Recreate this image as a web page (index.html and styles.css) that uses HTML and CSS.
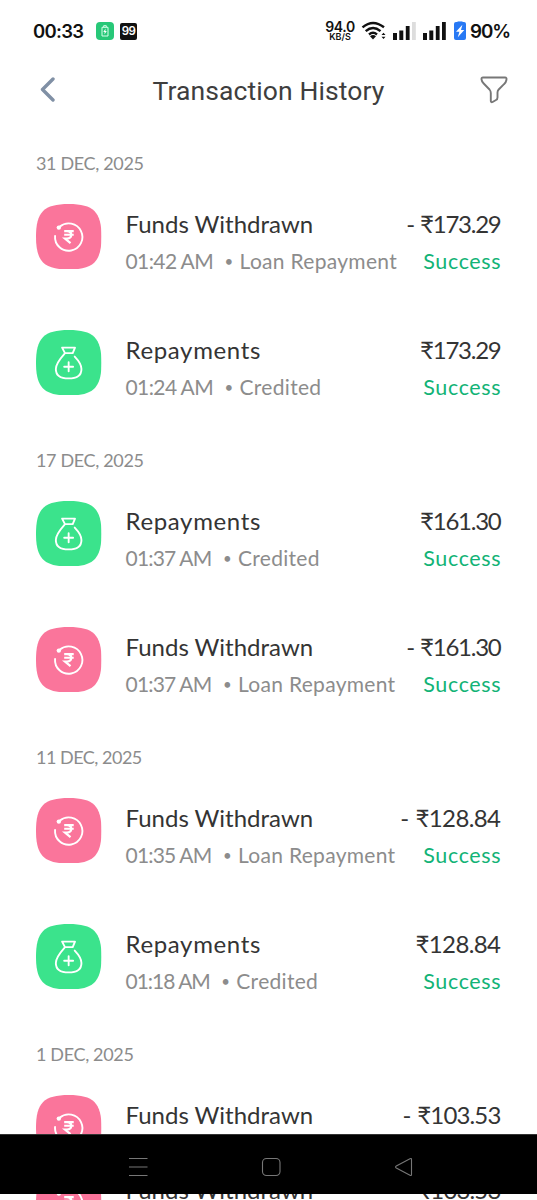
FILE: index.html
```html
<!DOCTYPE html>
<html lang="en">
<head>
<meta charset="utf-8">
<title>Transaction History</title>
<link rel="stylesheet" href="styles.css">
</head>
<body>
<svg class="defs" aria-hidden="true">
  <symbol id="withdraw" viewBox="0 0 66 66">
    <path class="tile-pink" d="M33 0C58 0 66 8 66 33S58 66 33 66 0 58 0 33 8 0 33 0Z"/>
    <path class="line" d="M19.2 32.2A13.8 13.8 0 1 0 23.8 23"/>
    <circle class="dot" cx="23" cy="23.8" r="2.2"/>
    <path class="rupee" d="M28.4 27.4H38M28.4 31H38M29 27.4H31.2C37 27.4 37 34.8 31.2 34.8H29.2L34.8 39.4"/>
  </symbol>
  <symbol id="bag" viewBox="0 0 66 66">
    <path class="tile-green" d="M33 0C58 0 66 8 66 33S58 66 33 66 0 58 0 33 8 0 33 0Z"/>
    <path class="line" d="M26.3 17.8H39.3L37 23.3H29.2ZM29.2 23.3C25.5 27.5 20 33.4 20 39.2C20 46 25 48.8 32.8 48.8S45.8 46 45.8 39.2C45.8 35.4 43 31 39 26.8M32.9 32.5V41.5M28.4 37H37.4"/>
  </symbol>
</svg>
<div class="screen">
  <div class="status">
    <span class="clock">00:33</span>
    <svg class="charge" viewBox="0 0 18 18"><rect width="18" height="18" rx="4" fill="#27c878"/><path d="M6 5.3H12V14H6ZM7.7 5V3.7H10.3V5" fill="none" stroke="#d9ffeb" stroke-width="1"/><path d="M9.6 6.5 7.3 10H8.7L8.4 12.6 10.8 9H9.3Z" fill="#fff"/></svg>
    <span class="badge">99</span>
    <span class="speed"><b>94.0</b><i>KB/S</i></span>
    <svg class="wifi" viewBox="0 0 26 20"><path d="M1.5 6.3Q12 -2.5 23 6.3M4.7 10.1Q12 3.8 19.5 10.1M8 13.5Q12 10.2 16 13.5" fill="none" stroke="#111" stroke-width="2.4"/><path d="M9 15.2Q12 13 15 15.2L12 18.4Z" fill="#111"/><path d="M20.5 14 22.5 11.7 24.5 14ZM20.5 15.7H24.5L22.5 18Z" fill="#111"/></svg>
    <svg class="sim" viewBox="0 0 23 18"><path d="M0 11H4V18H0ZM6.3 8.5H10.3V18H6.3ZM12.8 4H16.6V18H12.8Z" fill="#111"/><path d="M19 0H22.8V18H19Z" fill="#ddd"/></svg>
    <svg class="sim second" viewBox="0 0 23 18"><path d="M0 11H4V18H0ZM6.3 8.5H10.3V18H6.3ZM12.8 4H16.6V18H12.8ZM19 0H22.8V18H19Z" fill="#111"/></svg>
    <svg class="battery" viewBox="0 0 12 19"><path d="M3.5 1.3V0H8.5V1.3Z" fill="#83b3fb"/><rect y="1" width="12" height="18" rx="2" fill="#2879f4"/><path d="M8.4 3.8 2 10.8H5.4L3.8 16.2 10.3 9H7Z" fill="#fff"/></svg>
    <span class="percent">90%</span>
  </div>
  <header class="header">
    <svg class="back" viewBox="0 0 16 26"><path d="M13 3 2.5 13.5 13 24" fill="none" stroke="#8090a5" stroke-width="3.4" stroke-linecap="round" stroke-linejoin="round"/></svg>
    <h1>Transaction History</h1>
    <svg class="filter" viewBox="0 0 28 28"><path d="M3 1.5H25Q27 1.5 26.4 4Q26 6.5 24 8.2L18.7 13.5Q17.5 14.8 17.5 16.5V21.5Q17.5 23.3 16 24L12.6 26Q11 26.7 10.8 24.8V17Q10.8 15 9.5 13.5L3.7 7.5Q1.7 5.5 1.5 3.3Q1.4 1.5 3 1.5Z" fill="none" stroke="#777" stroke-width="1.9" stroke-linejoin="round"/></svg>
  </header>
  <main class="list">
    <section class="day">
      <h2>31 DEC, 2025</h2>
      <div class="row"><svg class="tile"><use href="#withdraw"/></svg><div class="info"><div class="top"><span class="name">Funds Withdrawn</span><span class="amount">- ₹173.29</span></div><div class="sub"><span class="time">01:42 AM</span><span class="bullet">•</span><span class="kind">Loan Repayment</span><span class="ok">Success</span></div></div></div>
      <div class="row"><svg class="tile"><use href="#bag"/></svg><div class="info"><div class="top"><span class="name credit">Repayments</span><span class="amount">₹173.29</span></div><div class="sub"><span class="time">01:24 AM</span><span class="bullet">•</span><span class="kind">Credited</span><span class="ok">Success</span></div></div></div>
    </section>
    <section class="day">
      <h2>17 DEC, 2025</h2>
      <div class="row"><svg class="tile"><use href="#bag"/></svg><div class="info"><div class="top"><span class="name credit">Repayments</span><span class="amount">₹161.30</span></div><div class="sub"><span class="time narrow">01:37 AM</span><span class="bullet">•</span><span class="kind">Credited</span><span class="ok">Success</span></div></div></div>
      <div class="row"><svg class="tile"><use href="#withdraw"/></svg><div class="info"><div class="top"><span class="name">Funds Withdrawn</span><span class="amount">- ₹161.30</span></div><div class="sub"><span class="time narrow">01:37 AM</span><span class="bullet">•</span><span class="kind">Loan Repayment</span><span class="ok">Success</span></div></div></div>
    </section>
    <section class="day">
      <h2 class="narrow">11 DEC, 2025</h2>
      <div class="row"><svg class="tile"><use href="#withdraw"/></svg><div class="info"><div class="top"><span class="name">Funds Withdrawn</span><span class="amount wide">- ₹128.84</span></div><div class="sub"><span class="time narrow">01:35 AM</span><span class="bullet">•</span><span class="kind">Loan Repayment</span><span class="ok">Success</span></div></div></div>
      <div class="row"><svg class="tile"><use href="#bag"/></svg><div class="info"><div class="top"><span class="name credit">Repayments</span><span class="amount wide">₹128.84</span></div><div class="sub"><span class="time narrower">01:18 AM</span><span class="bullet">•</span><span class="kind">Credited</span><span class="ok">Success</span></div></div></div>
    </section>
    <section class="day">
      <h2>1 DEC, 2025</h2>
      <div class="row"><svg class="tile"><use href="#withdraw"/></svg><div class="info"><div class="top"><span class="name">Funds Withdrawn</span><span class="amount medium">- ₹103.53</span></div></div></div>
    </section>
  </main>
  <nav class="nav">
    <svg viewBox="0 0 537 60"><g fill="none" stroke="#777" stroke-width="1.1"><path d="M129 23.5H147.5M129 32H147.5M129 40.5H147.5"/><rect x="262.5" y="23.5" width="17.5" height="17" rx="4"/><path d="M411.5 24.5V39.5Q411.5 41 410 40.2L396.3 33Q394.8 32 396.3 31L410 23.8Q411.5 23 411.5 24.5Z"/></g></svg>
  </nav>
  <div class="peek">
    <div class="row"><svg class="tile"><use href="#withdraw"/></svg><div class="info"><div class="top"><span class="name">Funds Withdrawn</span><span class="amount medium">₹103.53</span></div></div></div>
  </div>
</div>
</body>
</html>
```
FILE: styles.css
```css
* { box-sizing: border-box; }
body { margin: 0; background: #fff; font-family: Lato, "Noto Sans", sans-serif; }
.defs { display: none; }
.screen { display: flex; flex-direction: column; width: 537px; height: 1200px; overflow: hidden; }
.status { flex: none; height: 62px; display: flex; align-items: center; padding-left: 33px; color: #111; font-family: Inter, sans-serif; font-weight: 600; }
.clock { font-size: 18.5px; width: 63px; letter-spacing: -.7px; }
.charge { width: 18px; height: 18px; }
.badge { margin-left: 6px; width: 17px; height: 17px; border-radius: 2px; background: #111; color: #fff; font-size: 11.5px; line-height: 17px; text-align: center; letter-spacing: -.5px; }
.speed { display: flex; flex-direction: column; width: 30px; margin-left: 188px; text-align: center; }
.speed b { font-size: 14px; line-height: 11px; font-weight: 600; letter-spacing: -.4px; }
.speed i { font-size: 9px; line-height: 9px; font-style: normal; }
.wifi { width: 26px; height: 20px; margin-left: 6px; }
.sim { width: 23px; height: 18px; margin-left: 6px; }
.sim.second { margin-left: 7px; }
.battery { width: 12px; height: 19px; margin: 0 0 1px 8px; }
.percent { font-size: 18.8px; margin-left: 4px; letter-spacing: -1.1px; }
.header { flex: none; height: 58px; padding: 0 29px 0 40px; display: flex; justify-content: space-between; align-items: center; }
.header h1 { margin: 0 0 0 1px; font: 400 26.5px/32px Roboto, sans-serif; letter-spacing: .1px; color: #3e3e3e; }
.back { width: 16px; height: 26px; margin-bottom: 5px; }
.filter { width: 28px; height: 28px; margin-bottom: 3px; }
.list { flex: none; height: 1014px; padding: 30.5px 36px 0; overflow: hidden; }
.day { height: 297px; }
.day h2 { margin: 0 0 29px; font-size: 18px; line-height: 24px; font-weight: 400; letter-spacing: -.35px; color: #8c8c8c; }
.day h2.narrow { letter-spacing: -.5px; }
.row { display: flex; gap: 24px; height: 66px; margin-bottom: 60px; }
.tile { flex: none; width: 65.5px; height: 65.5px; }
.tile-pink { fill: #fa759b; }
.tile-green { fill: #3be38c; }
.line { fill: none; stroke: #fff; stroke-width: 1.9; stroke-linecap: round; stroke-linejoin: round; }
.dot { fill: #fff; }
.rupee { fill: none; stroke: #fff; stroke-width: 2.2; }
.info { flex: 1; padding-top: 3px; }
.top { display: flex; justify-content: space-between; height: 34px; font-size: 24px; line-height: 34px; color: #343434; }
.credit { letter-spacing: .65px; }
.amount { letter-spacing: -1.25px; word-spacing: 1.4px; margin-right: .5px; }
.amount.wide { letter-spacing: -.6px; margin-right: .6px; }
.amount.medium { letter-spacing: -.85px; }
.sub { display: flex; height: 30px; margin-top: 5px; font-size: 21px; line-height: 30px; color: #8c8c8c; white-space: nowrap; }
.time { letter-spacing: -.6px; }
.time.narrow { letter-spacing: -.8px; }
.time.narrower { letter-spacing: -1px; }
.kind { letter-spacing: .3px; }
.bullet { width: 7px; margin: 0 8px 0 11.5px; font-size: 15px; }
.ok { margin-left: auto; font-size: 21.5px; letter-spacing: .65px; margin-right: -.3px; color: #12b376; }
.nav { flex: none; height: 60px; background: #000; border-top: 1px solid #333; }
.nav svg { display: block; width: 537px; height: 60px; }
.peek { flex: none; height: 6px; padding: 0 36px; overflow: hidden; }
.peek .row { margin-top: -24px; }
```
